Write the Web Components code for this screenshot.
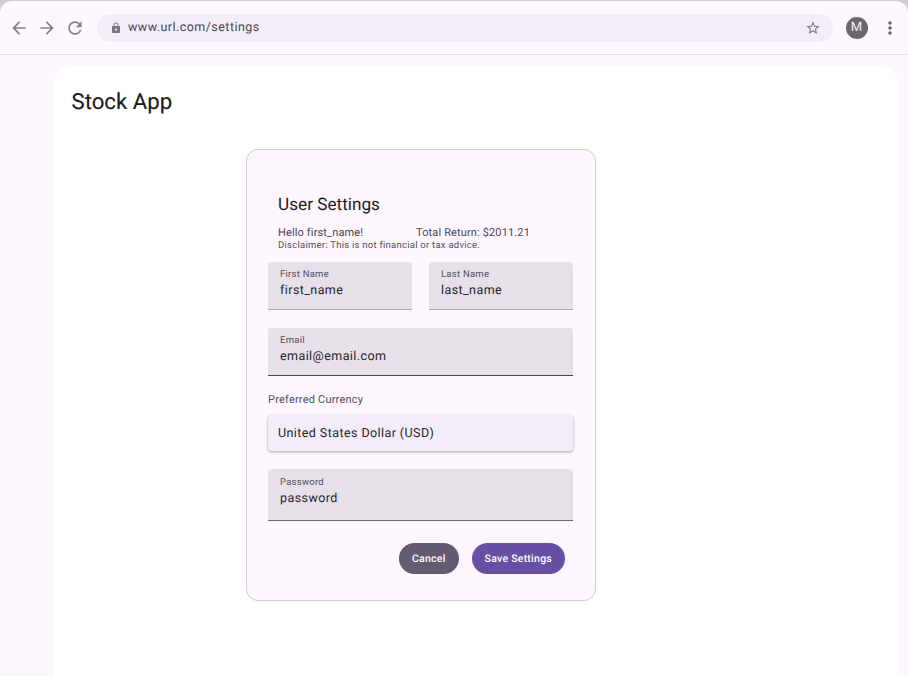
<!doctype html>
<html>
<head>
<meta charset="utf-8">
<title>Stock App</title>
<style>
    html, body { margin: 0; height: 676px; overflow: hidden; background: #cfcad3; }
    body { font-family: Roboto, "Liberation Sans", sans-serif; color: #1d1b20; text-rendering: geometricPrecision; }
</style>
</head>
<body>
<browser-window url="www.url.com/settings" avatar="M">
    <app-surface heading="Stock App">
        <settings-card heading="User Settings">
            <div slot="intro-left">Hello first_name!</div>
            <div slot="intro-right">Total Return: $2011.21</div>
            <div slot="disclaimer">Disclaimer: This is not financial or tax advice.</div>
            <div slot="names">
                <text-field label="First Name" value="first_name" tone="soft"></text-field>
                <text-field label="Last Name" value="last_name" tone="soft"></text-field>
            </div>
            <text-field slot="email" label="Email" value="email@email.com"></text-field>
            <select-field slot="currency" label="Preferred Currency" value="United States Dollar (USD)"></select-field>
            <text-field slot="password" label="Password" value="password" tall tone="mid"></text-field>
            <pill-button slot="actions" kind="secondary">Cancel</pill-button>
            <pill-button slot="actions" kind="primary">Save Settings</pill-button>
        </settings-card>
    </app-surface>
</browser-window>

<script>
    const makeRoot = (el, html) => {
        el.attachShadow({mode: 'open'}).innerHTML = html
    }

    customElements.define('browser-window', class BrowserWindow extends HTMLElement {
        connectedCallback() {
            makeRoot(this, `
            <style>
                :host {
                    display: flex;
                    flex-direction: column;
                    height: 675px;
                    margin-top: 1px;
                    background: #fef7ff;
                    border-radius: 12px 12px 0 0;
                    overflow: hidden;
                }
                .bar {
                    flex: none;
                    height: 54px;
                    box-sizing: border-box;
                    border-bottom: 1px solid #e4dfe6;
                    display: flex;
                    align-items: center;
                }
                .nav { display: flex; align-items: center; width: 97px; padding-left: 9px; box-sizing: border-box; gap: 8px; }
                .nav svg { display: block; width: 20px; height: 20px; fill: #86818b; }
                .omni {
                    width: 736px;
                    height: 28px;
                    border-radius: 14px;
                    background: #f3edf7;
                    display: flex;
                    align-items: center;
                    padding: 0 12px 0 13px;
                    box-sizing: border-box;
                }
                .lock { width: 12px; height: 12px; fill: #79747e; flex: none; }
                .url { font-size: 12.5px; letter-spacing: .45px; color: #49454f; margin-left: 6px; flex: 1; }
                .star { width: 16px; height: 16px; fill: #79747e; flex: none; }
                .avatar {
                    width: 22px; height: 22px; border-radius: 50%;
                    background: #6c666f; color: #f2eef4;
                    font-size: 13px; line-height: 22px; text-align: center;
                    margin-left: 12.5px; flex: none;
                }
                .dots { width: 20px; height: 20px; fill: #605d66; margin-left: 12.5px; flex: none; }
                .page { flex: 1; min-height: 0; padding: 11px 9px 0 53px; }
            </style>
            <div class="bar">
                <div class="nav">
                    <svg viewBox="0 0 24 24"><path d="M20 11H7.83l5.59-5.59L12 4l-8 8 8 8 1.41-1.41L7.83 13H20v-2z"/></svg>
                    <svg viewBox="0 0 24 24"><path d="M12 4l-1.41 1.41L16.17 11H4v2h12.17l-5.58 5.59L12 20l8-8z"/></svg>
                    <svg viewBox="0 0 24 24"><path d="M17.65 6.35A7.958 7.958 0 0 0 12 4c-4.42 0-7.99 3.58-7.99 8s3.57 8 7.99 8c3.73 0 6.84-2.55 7.73-6h-2.08A5.99 5.99 0 0 1 12 18c-3.31 0-6-2.69-6-6s2.69-6 6-6c1.66 0 3.14.69 4.22 1.78L13 11h7V4l-2.35 2.35z"/></svg>
                </div>
                <div class="omni">
                    <svg class="lock" viewBox="0 0 24 24"><path d="M18 8h-1V6c0-2.76-2.24-5-5-5S7 3.24 7 6v2H6c-1.1 0-2 .9-2 2v10c0 1.1.9 2 2 2h12c1.1 0 2-.9 2-2V10c0-1.1-.9-2-2-2zm-6 9c-1.1 0-2-.9-2-2s.9-2 2-2 2 .9 2 2-.9 2-2 2zm3.1-9H8.9V6c0-1.71 1.39-3.1 3.1-3.1s3.1 1.39 3.1 3.1v2z"/></svg>
                    <span class="url">${this.getAttribute('url')}</span>
                    <svg class="star" viewBox="0 0 24 24"><path d="M22 9.24l-7.19-.62L12 2 9.19 8.63 2 9.24l5.46 4.73L5.82 21 12 17.27 18.18 21l-1.63-7.03L22 9.24zM12 15.4l-3.76 2.27 1-4.28-3.32-2.88 4.38-.38L12 6.1l1.71 4.04 4.38.38-3.32 2.88 1 4.28L12 15.4z"/></svg>
                </div>
                <div class="avatar">${this.getAttribute('avatar')}</div>
                <svg class="dots" viewBox="0 0 24 24"><path d="M12 8c1.1 0 2-.9 2-2s-.9-2-2-2-2 .9-2 2 .9 2 2 2zm0 2c-1.1 0-2 .9-2 2s.9 2 2 2 2-.9 2-2-.9-2-2-2zm0 6c-1.1 0-2 .9-2 2s.9 2 2 2 2-.9 2-2-.9-2-2-2z"/></svg>
            </div>
            <div class="page"><slot></slot></div>`)
        }
    })

    customElements.define('app-surface', class AppSurface extends HTMLElement {
        connectedCallback() {
            makeRoot(this, `
            <style>
                :host {
                    display: block;
                    height: 640px;
                    background: #fff;
                    border-radius: 20px 20px 0 0;
                    padding: 22px 0 0 18.5px;
                    box-sizing: border-box;
                }
                h1 { margin: 0; font-size: 22.2px; font-weight: 400; line-height: 28px; color: #1d1b20; -webkit-text-stroke: .15px #1d1b20; }
                .body { padding: 33px 0 0 174.5px; }
            </style>
            <h1>${this.getAttribute('heading')}</h1>
            <div class="body"><slot></slot></div>`)
        }
    })

    customElements.define('settings-card', class SettingsCard extends HTMLElement {
        connectedCallback() {
            makeRoot(this, `
            <style>
                :host {
                    display: block;
                    width: 350px;
                    height: 452px;
                    box-sizing: border-box;
                    background: #fef7ff;
                    border: 1px solid #cfcad5;
                    border-radius: 12px;
                    padding: 42px 22px 0 21px;
                }
                h2 { margin: 0 0 0 10px; font-size: 17.2px; font-weight: 400; line-height: 26px; }
                .intro {
                    display: grid;
                    grid-template-columns: 138px 1fr;
                    margin: 8px 0 0 10px;
                    font-size: 11px;
                    line-height: 13px;
                    letter-spacing: .14px;
                    color: #49454f;
                }
                .note { margin: 0 0 0 10px; font-size: 9.5px; line-height: 13px; letter-spacing: .25px; color: #544f5a; }
                .names { margin-top: 10px; }
                ::slotted([slot=names]) { display: grid; grid-template-columns: 144px 144px; column-gap: 17px; }
                .email { margin-top: 18px; }
                .currency { margin-top: 16px; }
                .password { margin-top: 18px; }
                .actions { display: flex; justify-content: flex-end; gap: 13px; margin-top: 22px; padding-right: 8px; }
            </style>
            <h2>${this.getAttribute('heading')}</h2>
            <div class="intro"><slot name="intro-left"></slot><slot name="intro-right"></slot></div>
            <div class="note"><slot name="disclaimer"></slot></div>
            <div class="names"><slot name="names"></slot></div>
            <div class="email"><slot name="email"></slot></div>
            <div class="currency"><slot name="currency"></slot></div>
            <div class="password"><slot name="password"></slot></div>
            <div class="actions"><slot name="actions"></slot></div>`)
        }
    })

    customElements.define('text-field', class TextField extends HTMLElement {
        connectedCallback() {
            const tall = this.hasAttribute('tall')
            const line = {soft: '#aca6b0', mid: '#6a6570'}[this.getAttribute('tone')] || '#49454f'
            makeRoot(this, `
            <style>
                :host {
                    display: block;
                    height: ${tall ? 52 : 48}px;
                    box-sizing: border-box;
                    background: #e6e0e9;
                    border-radius: 3px 3px 0 0;
                    border-bottom: 1px solid ${line};
                    padding: ${tall ? 7 : 6}px 12px 0;
                }
                .label { font-size: 9.5px; line-height: 12px; letter-spacing: .25px; color: #544f5a; padding-top: 1px; }
                .value { font-size: 12.5px; line-height: 18px; letter-spacing: .42px; color: #28252c; margin-top: .5px; }
            </style>
            <div class="label">${this.getAttribute('label')}</div>
            <div class="value">${this.getAttribute('value')}</div>`)
        }
    })

    customElements.define('select-field', class SelectField extends HTMLElement {
        connectedCallback() {
            makeRoot(this, `
            <style>
                :host { display: block; }
                .label { font-size: 11px; line-height: 16px; letter-spacing: .2px; color: #544f5a; margin-top: 1px; }
                .box {
                    margin-top: 7px;
                    height: 36px;
                    box-sizing: border-box;
                    padding: 0 10px;
                    display: flex;
                    align-items: center;
                    background: #f3edf7;
                    border-radius: 4px;
                    box-shadow: 0 1px 3px rgba(0,0,0,.35);
                    font-size: 12.5px;
                    letter-spacing: .42px;
                    color: #28252c;
                }
            </style>
            <div class="label">${this.getAttribute('label')}</div>
            <div class="box">${this.getAttribute('value')}</div>`)
        }
    })

    customElements.define('pill-button', class PillButton extends HTMLElement {
        connectedCallback() {
            const bg = this.getAttribute('kind') === 'primary' ? '#6750a4' : '#625b71'
            makeRoot(this, `
            <style>
                :host {
                    display: inline-flex;
                    align-items: center;
                    height: 31px;
                    padding: 0 13px;
                    border-radius: 16px;
                    background: ${bg};
                    color: #fff;
                    font-size: 10.5px;
                    font-weight: 500;
                    letter-spacing: .25px;
                }
            </style>
            <slot></slot>`)
        }
    })
</script>
</body>
</html>
